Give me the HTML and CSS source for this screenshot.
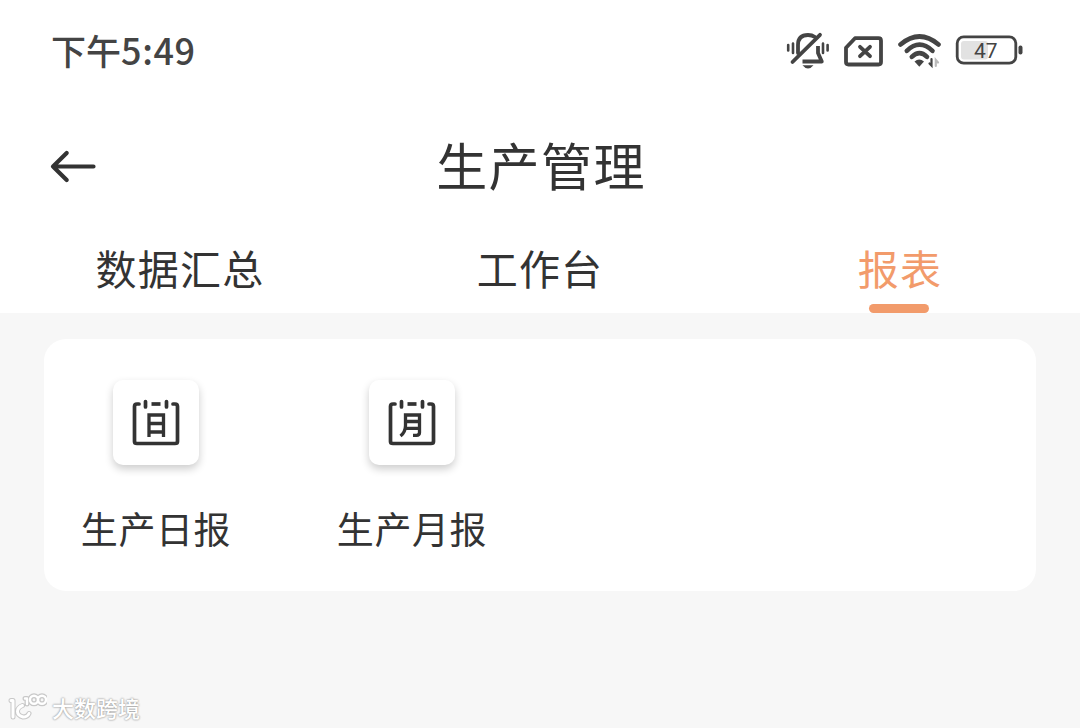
FILE: index.html
```html
<!DOCTYPE html>
<html lang="zh-CN">
<head>
    <meta charset="UTF-8">
    <meta name="viewport" content="width=device-width, initial-scale=1.0">
    <title>生产管理</title>
    <link rel="stylesheet" href="styles.css">
</head>
<body>
    <div class="top">
        <div class="status">
            <span class="time">下午<span class="digits">5:49</span></span>
            <svg class="status-icons" width="240" height="40" viewBox="784 30 240 40">
                <!-- mute -->
                <g fill="none" stroke="#444" stroke-width="3.800" stroke-linecap="round" stroke-linejoin="round">
                    <path d="M798 53V45C798 38 802 35 808 35Q812 35 815 37"/>
                    <path d="M792.500 62L820 34.800"/>
                    <path d="M818 46V53L821.800 61.500H802.500" stroke-linecap="butt"/>
                    <path d="M788.200 45V50.500M793 43.500V53M823 43.500V53M827.600 45V50.500" stroke-width="2.600"/>
                    <path d="M802.500 65.300H813.500Q811 68.500 808 68.500T802.500 65.300Z" fill="#444" stroke="none"/>
                </g>
                <!-- no sim -->
                <g fill="none" stroke="#444" stroke-width="3.800" stroke-linecap="round" stroke-linejoin="round">
                    <path d="M855 38.200H878.500Q881 38.200 881 40.700V62Q881 64.500 878.500 64.500H848.500Q846 64.500 846 62V47.800Z"/>
                    <path d="M860 46.800L870 56.200M870 46.800L860 56.200"/>
                </g>
                <!-- wifi -->
                <g fill="none" stroke="#444" stroke-width="4.600" stroke-linecap="round">
                    <path d="M900.500 44.500Q919.500 28.500 938.500 44.500"/>
                    <path d="M906.800 50.800Q919.500 38.500 932.500 50.800"/>
                    <path d="M911.800 56.800Q919.500 49.500 927 56.800"/>
                    <path d="M914.500 61.500Q919.300 57.500 924 61.500L919.300 66.800Z" fill="#444" stroke="none"/>
                    <path d="M931.500 59V65.500L929.500 63.500" stroke-width="2.200"/>
                    <path d="M935.800 66V60L938 62.500" stroke="#bbb" stroke-width="2.200"/>
                </g>
                <!-- battery -->
                <rect x="961" y="41" width="27" height="18.500" rx="3" fill="#e2e2e2"/>
                <rect x="957.200" y="36.800" width="58.600" height="26.400" rx="6.500" fill="none" stroke="#444" stroke-width="2.800"/>
                <rect x="1018.500" y="45.500" width="4" height="9" rx="1.900" fill="#444"/>
                <text class="battery-text" x="985.700" y="57.700" text-anchor="middle">47</text>
            </svg>
        </div>
        <div class="header">
            <svg class="back" width="48" height="36" viewBox="0 0 48 36">
                <path d="M17.700 5L4 18.500L17.700 32M4 18.500H44.500" fill="none" stroke="#333" stroke-width="4.200" stroke-linecap="round" stroke-linejoin="round"/>
            </svg>
            <h1 class="title">生产管理</h1>
        </div>
        <div class="tabs">
            <div class="tab">数据汇总</div>
            <div class="tab">工作台</div>
            <div class="tab active">报表</div>
        </div>
    </div>

    <div class="card">
        <div class="item">
            <div class="tile">
                <svg width="48" height="50" viewBox="0 0 48 50">
                    <g fill="none" stroke="#333" stroke-width="3.700" stroke-linecap="round" stroke-linejoin="round">
                        <path d="M7 6H5Q2.500 6 2.500 8.500V43.500Q2.500 45.500 5 45.500H43Q45.500 45.500 45.500 43.500V8.500Q45.500 6 43 6H41"/>
                        <path d="M13.500 3.500V9M34.500 3.500V9"/>
                        <path d="M19.500 6H28.500" stroke-linecap="butt"/>
                        <path d="M17 39V17H31.500V39M17 25.500H31.500M17 34H31.500" stroke-linecap="butt" stroke-linejoin="miter" stroke-width="3.300"/>
                    </g>
                </svg>
            </div>
            <div class="name">生产日报</div>
        </div>
        <div class="item">
            <div class="tile">
                <svg width="48" height="50" viewBox="0 0 48 50">
                    <g fill="none" stroke="#333" stroke-width="3.700" stroke-linecap="round" stroke-linejoin="round">
                        <path d="M7 6H5Q2.500 6 2.500 8.500V43.500Q2.500 45.500 5 45.500H43Q45.500 45.500 45.500 43.500V8.500Q45.500 6 43 6H41"/>
                        <path d="M13.500 3.500V9M34.500 3.500V9"/>
                        <path d="M19.500 6H28.500" stroke-linecap="butt"/>
                        <path d="M12.500 38Q17.500 34 17.500 27.500V17H31.500V34.500Q31.500 37.300 28.500 37.300H25M17.500 23.500H31.500M17.500 30.300H31.500" stroke-linecap="butt" stroke-linejoin="miter" stroke-width="3.300"/>
                    </g>
                </svg>
            </div>
            <div class="name">生产月报</div>
        </div>
    </div>

    <div class="watermark">
        <svg width="40" height="32" viewBox="0 0 40 32" fill="none" stroke-linecap="round" stroke-linejoin="round">
            <g stroke="#c8c8c8" stroke-width="5">
                <path d="M4 7.500H6V24M15.500 12.500Q10.500 14.500 10.500 18.500T16 24Q20.500 24 22 20.500M18 5.500H20V11"/>
                <circle cx="27" cy="6.800" r="4"/>
                <circle cx="35" cy="6.800" r="4"/>
            </g>
            <g stroke="#fff" stroke-width="3">
                <path d="M4 7.500H6V24M15.500 12.500Q10.500 14.500 10.500 18.500T16 24Q20.500 24 22 20.500" />
                <path d="M18 5.500H20V11" stroke-width="2.400"/>
                <circle cx="27" cy="6.800" r="4" stroke-width="2.400"/>
                <circle cx="35" cy="6.800" r="4" stroke-width="2.400"/>
            </g>
        </svg>
        <span class="watermark-text">大数跨境</span>
    </div>
</body>
</html>
```
FILE: styles.css
```css
* {
    box-sizing: border-box;
}
body {
    margin: 0;
    height: 728px;
    overflow: hidden;
    background: #f7f7f7;
    color: #333;
    font-family: "Noto Sans CJK SC", sans-serif;
    display: flex;
    flex-direction: column;
}
.top {
    height: 313px;
    background: #fff;
}
.status {
    height: 100px;
    padding: 0 56px 0 51px;
    display: flex;
    align-items: center;
    justify-content: space-between;
}
.time {
    padding-bottom: 2px;
    color: #444;
    font-size: 35px;
    font-weight: 500;
    line-height: 40px;
}
.digits {
    font-size: 36px;
    letter-spacing: 0.6px;
}
.battery-text {
    fill: #444;
    font-family: Roboto, sans-serif;
    font-size: 21px;
    font-weight: 400;
}
.header {
    height: 132px;
    padding: 0 49px;
    display: grid;
    grid-template-columns: 48px 1fr 48px;
    align-items: center;
}
.title {
    margin: 0;
    padding: 0 0 5px 2px;
    text-align: center;
    font-size: 51px;
    font-weight: 400;
    line-height: 60px;
    letter-spacing: 1.4px;
}
.tabs {
    height: 81px;
    display: grid;
    grid-template-columns: repeat(3, 1fr);
}
.tab {
    display: flex;
    flex-direction: column;
    justify-content: space-between;
    align-items: center;
    font-size: 41px;
    line-height: 70px;
    letter-spacing: 1.2px;
}
.active {
    color: #f29b6b;
}
.active::after {
    content: "";
    width: 60px;
    height: 9px;
    margin-right: 2px;
    border-radius: 5px;
    background: #f29b6b;
}
.card {
    height: 252px;
    margin: 26px 44px 0;
    padding: 41px 37px 0;
    border-radius: 22px;
    background: #fff;
    display: flex;
    gap: 106px;
}
.item {
    width: 150px;
    display: flex;
    flex-direction: column;
    align-items: center;
    gap: 40px;
}
.tile {
    width: 86px;
    height: 85px;
    border-radius: 10px;
    background: #fff;
    box-shadow: 0 4px 9px rgba(0, 0, 0, 0.2);
    display: flex;
    align-items: center;
    justify-content: center;
}
.name {
    font-size: 37px;
    line-height: 46px;
    letter-spacing: 0.6px;
    white-space: nowrap;
}
.watermark {
    margin: auto 0 2px 7px;
    display: flex;
    align-items: center;
    gap: 5px;
    color: #fff;
    font-size: 22px;
    font-weight: 500;
    text-shadow: 0 0 2px #999, 0 0 2px #aaa;
}
.watermark-text {
    padding-bottom: 4px;
    line-height: 30px;
}
```
